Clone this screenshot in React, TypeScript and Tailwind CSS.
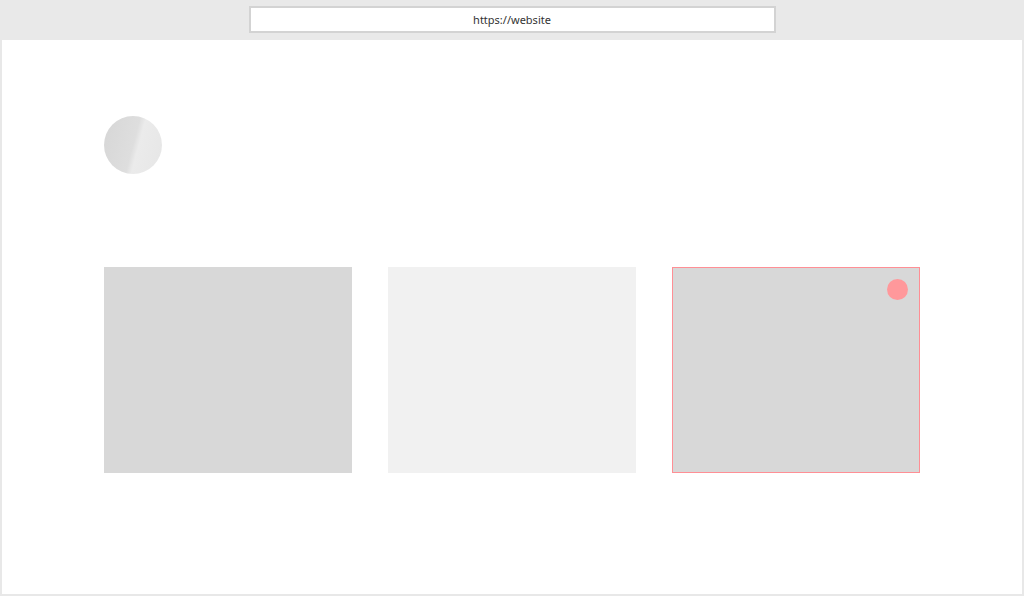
export default function App() {
  return (
    <div className="flex h-[596px] w-[1024px] flex-col bg-white font-['Noto_Sans',sans-serif]">
      {/* browser bar */}
      <header className="flex h-10 shrink-0 items-start justify-center bg-[#e9e9e9] pt-[6px]">
        <div className="flex h-[27px] w-[527px] items-center justify-center border-2 border-[#d3d3d3] bg-white pt-[2px] text-[11px] text-[#333]">
          https://website
        </div>
      </header>

      {/* page body */}
      <main className="flex flex-1 flex-col border-x-2 border-b-2 border-[#e8e8e8] px-[102px] pt-[76px]">
        <div className="h-[58px] w-[58px] rounded-full bg-[linear-gradient(105deg,#d6d6d6_0%,#dedede_50%,#ebebeb_58%,#e6e6e6_100%)]" />

        <div className="mt-[93px] flex gap-9">
          <div className="h-[206px] w-[248px] bg-[#d8d8d8]" />
          <div className="h-[206px] w-[248px] bg-[#f1f1f1]" />
          <div className="relative h-[206px] w-[248px] border border-[#ff8f95] bg-[#d8d8d8]">
            <span className="absolute right-[11px] top-[11px] h-[21px] w-[21px] rounded-full bg-[#ff989b]" />
          </div>
        </div>
      </main>
    </div>
  )
}
